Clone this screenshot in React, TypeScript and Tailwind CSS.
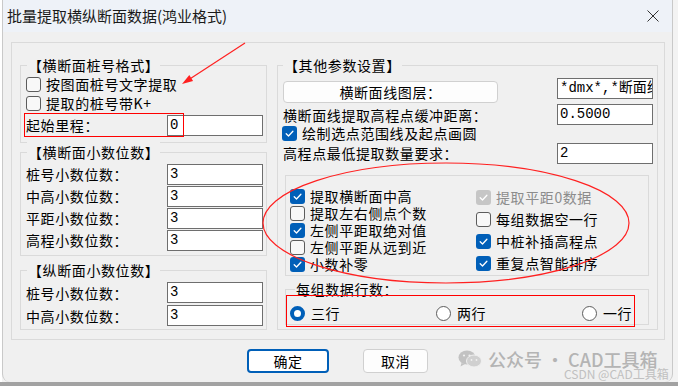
import React from 'react';

const Check = ({ checked = false, disabled = false }: { checked?: boolean; disabled?: boolean }) => (
  <span
    className={`flex h-[15px] w-[15px] shrink-0 items-center justify-center rounded-[3px] ${
      checked ? (disabled ? 'bg-[#c6c6c6]' : 'bg-[#005fb8]') : 'border border-[#5c5c5c] bg-[#f8f8f8]'
    }`}
  >
    {checked && (
      <svg width="11" height="11" viewBox="0 0 11 11">
        <path d="M2.2 5.8 L4.5 8 L8.9 3.2" fill="none" stroke="white" strokeWidth="1.3" strokeLinecap="round" strokeLinejoin="round" />
      </svg>
    )}
  </span>
);

const Radio = ({ checked = false }: { checked?: boolean }) => (
  <span
    className={`h-[15px] w-[15px] shrink-0 rounded-full bg-white ${
      checked ? 'border-[4px] border-[#005fb8]' : 'border border-[#5c5c5c]'
    }`}
  />
);

const Field = ({ value, className = '' }: { value: string; className?: string }) => (
  <div
    className={`h-[21px] w-[96px] shrink-0 overflow-hidden whitespace-nowrap border border-[#6e6e6e] bg-white pl-[2px] font-['Liberation_Mono','Noto_Sans_CJK_SC',monospace] text-[14px] leading-[19px] tracking-normal ${className}`}
  >
    {value}
  </div>
);

const Legend = ({ text, className = '' }: { text: string; className?: string }) => (
  <span className={`-mt-[11px] block h-[20px] w-fit bg-[#f0f0f0] px-[1px] leading-[20px] ${className}`}>{text}</span>
);

const CheckRow = ({ label, checked, disabled, h }: { label: string; checked?: boolean; disabled?: boolean; h: string }) => (
  <div className={`flex items-center gap-[5px] ${h}`}>
    <Check checked={checked} disabled={disabled} />
    <span className={`whitespace-nowrap leading-[17px] ${disabled ? 'text-[#8c8c8c]' : ''}`}>{label}</span>
  </div>
);

const NumRow = ({ label, value, h }: { label: string; value: string; h: string }) => (
  <div className={`flex items-center justify-between pl-[5px] pr-[3px] ${h}`}>
    <span className="whitespace-nowrap leading-[18px]">{label}</span>
    <Field value={value} />
  </div>
);

export default function App() {
  return (
    <div className="relative flex h-[386px] w-[678px] flex-col bg-[#f3f3f3] font-['Noto_Sans_CJK_SC',sans-serif] text-[14px] tracking-[0.6px] text-black">
      <div className="flex h-[382px]">
        <div className="w-[2px] bg-white" />
        <div className="flex w-[671px] flex-col overflow-hidden rounded-b-[8px] border-x border-[#c9c9c9] bg-[#f0f0f0]">
          {/* title bar */}
          <div className="flex h-[32px] items-center justify-between bg-[#eef2f8] pl-[4px] pr-[13px]">
            <span className="text-[15px] tracking-normal text-[#1a1a1a]">批量提取横纵断面数据(鸿业格式)</span>
            <svg width="12" height="12" viewBox="0 0 12 12">
              <path d="M0.5 0.5 L11.5 11.5 M11.5 0.5 L0.5 11.5" stroke="#333" strokeWidth="1" />
            </svg>
          </div>

          <div className="pl-[8px] pt-[10px]">
            <div className="flex h-[298px] w-[654px] gap-[10px] border border-[#dadada] pl-[8px] pt-[22px]">
              {/* left column */}
              <div className="flex w-[247px] flex-col">
                <div className="h-[78px] border border-[#dadada]">
                  <Legend text="【横断面桩号格式】" className="ml-[6px]" />
                  <div className="pl-[5px]">
                    <CheckRow label="按图面桩号文字提取" h="h-[19px]" />
                    <CheckRow label="提取的桩号带K+" h="h-[19px]" />
                  </div>
                  <div className="relative">
                    <NumRow label="起始里程：" value="0" h="h-[24px]" />
                    <div className="absolute left-[3px] top-0 h-[24px] w-[160px] border border-[#ff0000]" />
                  </div>
                </div>

                <div className="mt-[9px] h-[104px] border border-[#dadada]">
                  <Legend text="【横断面小数位数】" className="ml-[6px]" />
                  <div className="mt-[1px]">
                    <NumRow label="桩号小数位数：" value="3" h="h-[22px]" />
                    <NumRow label="中高小数位数：" value="3" h="h-[22px]" />
                    <NumRow label="平距小数位数：" value="3" h="h-[22px]" />
                    <NumRow label="高程小数位数：" value="3" h="h-[22px]" />
                  </div>
                </div>

                <div className="mt-[14px] h-[60px] border border-[#dadada]">
                  <Legend text="【纵断面小数位数】" className="ml-[6px]" />
                  <div className="mt-[1px]">
                    <NumRow label="桩号小数位数：" value="3" h="h-[23px]" />
                    <NumRow label="中高小数位数：" value="3" h="h-[23px]" />
                  </div>
                </div>
              </div>

              {/* right column */}
              <div className="h-[265px] w-[381px] border border-[#dadada]">
                <Legend text="【其他参数设置】" className="ml-[5px]" />
                <div className="flex h-[29px] items-start justify-between pl-[5px] pr-[4px]">
                  <div className="mt-[6px] flex h-[22px] w-[215px] items-center justify-center rounded-[4px] border border-[#d0d0d0] bg-[#fdfdfd]">
                    横断面线图层：
                  </div>
                  <Field value="*dmx*,*断面线" className="mt-[3px] text-[13px]" />
                </div>
                <div className="flex h-[21px] items-center justify-between pl-[5px] pr-[4px]">
                  <span className="whitespace-nowrap leading-[18px]">横断面线提取高程点缓冲距离：</span>
                  <Field value="0.5000" />
                </div>
                <div className="pl-[4px]">
                  <CheckRow label="绘制选点范围线及起点画圆" checked h="h-[17px]" />
                </div>
                <div className="flex h-[22px] items-center justify-between pl-[5px] pr-[4px]">
                  <span className="whitespace-nowrap leading-[18px]">高程点最低提取数量要求：</span>
                  <Field value="2" />
                </div>

                <div className="ml-[7px] mt-[11px] grid h-[101px] w-[364px] grid-cols-[190px_1fr] border border-[#dadada]">
                  <div className="pl-[4px] pt-[12px]">
                    <CheckRow label="提取横断面中高" checked h="h-[17px]" />
                    <CheckRow label="提取左右侧点个数" h="h-[17px]" />
                    <CheckRow label="左侧平距取绝对值" checked h="h-[17px]" />
                    <CheckRow label="左侧平距从远到近" h="h-[17px]" />
                    <CheckRow label="小数补零" checked h="h-[17px]" />
                  </div>
                  <div className="pt-[10px]">
                    <CheckRow label="提取平距0数据" checked disabled h="h-[22px]" />
                    <CheckRow label="每组数据空一行" h="h-[22px]" />
                    <CheckRow label="中桩补插高程点" checked h="h-[22px]" />
                    <CheckRow label="重复点智能排序" checked h="h-[22px]" />
                  </div>
                </div>

                <div className="relative ml-[7px] mt-[13px] h-[36px] w-[364px] border border-[#dadada]">
                  <Legend text="每组数据行数：" className="ml-[9px]" />
                  <div className="flex h-[24px] items-center pl-[4px] pt-[4px]">
                    <div className="flex w-[146px] items-center gap-[6px]">
                      <Radio checked />
                      <span>三行</span>
                    </div>
                    <div className="flex w-[146px] items-center gap-[6px]">
                      <Radio />
                      <span>两行</span>
                    </div>
                    <div className="flex items-center gap-[6px]">
                      <Radio />
                      <span>一行</span>
                    </div>
                  </div>
                  <div className="absolute left-0 top-[5px] h-[32px] w-[349px] border border-[#ff0000]" />
                </div>
              </div>
            </div>

            <div className="ml-[236px] mt-[9px] flex gap-[34px]">
              <button className="flex h-[24px] w-[82px] items-center justify-center rounded-[4px] border-2 border-[#005fb8] bg-white">
                确定
              </button>
              <button className="flex h-[24px] w-[65px] items-center justify-center rounded-[4px] border border-[#d0d0d0] bg-[#fdfdfd]">
                取消
              </button>
            </div>
          </div>
        </div>
      </div>
      <div className="h-[4px] bg-[#a2a2a2]" />

      {/* watermark */}
      <div className="pointer-events-none absolute left-[458px] top-[349px] flex items-center gap-[6px] tracking-normal text-[#b4b4b4]">
        <svg width="24" height="18" viewBox="0 0 24 18">
          <ellipse cx="9" cy="7.5" rx="8.5" ry="7" fill="#c2c2c2" />
          <path d="M3.5 13 L2.5 16.5 L7 14 Z" fill="#c2c2c2" />
          <ellipse cx="16" cy="11" rx="7.5" ry="6" fill="#d0d0d0" stroke="#f0f0f0" strokeWidth="1" />
          <circle cx="6" cy="5.5" r="1.1" fill="#f0f0f0" />
          <circle cx="11.5" cy="5.5" r="1.1" fill="#f0f0f0" />
          <circle cx="13.5" cy="10" r="0.9" fill="#f0f0f0" />
          <circle cx="18.5" cy="10" r="0.9" fill="#f0f0f0" />
        </svg>
        <span className="text-[18px] font-medium leading-[20px]">公众号 · CAD工具箱</span>
      </div>
      <div className="pointer-events-none absolute left-[564px] top-[366px] text-[12px] leading-[15px] tracking-normal text-[#c0c0c0]">
        CSDN @CAD工具箱
      </div>

      {/* annotations */}
      <svg className="pointer-events-none absolute left-0 top-0" width="678" height="386">
        <line x1="245" y1="43" x2="189" y2="79.5" stroke="#ff2020" strokeWidth="1.2" />
        <polygon points="182,84 193.1,80.9 189.3,75.1" fill="#ff2020" />
        <ellipse cx="446" cy="223" rx="183" ry="60" fill="none" stroke="#ff2020" strokeWidth="1.2" />
      </svg>
    </div>
  );
}
